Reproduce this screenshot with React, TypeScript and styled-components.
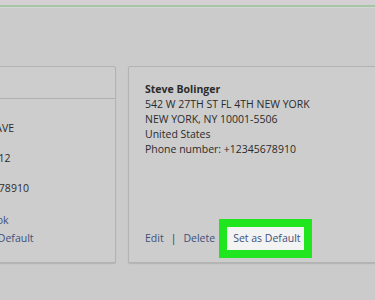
import React, {FC} from 'react';
import styled, {createGlobalStyle} from 'styled-components';

const GlobalStyle = createGlobalStyle`
  body {
    margin: 0;
    background: #cbcbcb;
    font-family: "Open Sans", "Liberation Sans", sans-serif;
    overflow: hidden;
  }
`;

const Page = styled.div`
  width: 375px;
  height: 300px;
  overflow: hidden;
  background: #cbcbcb;
`;

const TopStrip = styled.div`
  height: 5px;
  background: #d5d0d4;
  border-bottom: 2px solid #a6c6a8;
  box-shadow: 0 1px 0 #d3d6d3;
`;

const CardRow = styled.div`
  display: flex;
  gap: 12px;
  margin-left: -139px;
  padding-top: 59px;
`;

const Card = styled.div`
  flex: 0 0 auto;
  width: 255px;
  height: 197px;
  box-sizing: border-box;
  border: 1px solid #b3b3b3;
  border-radius: 2px;
  box-shadow: 0 1px 1px rgba(0, 0, 0, 0.12);
  background: #cdcdcd;
  display: flex;
  flex-direction: column;
`;

const CardHeader = styled.div`
  flex: 0 0 31px;
  border-bottom: 1px solid #b0b0b0;
`;

const CardBody = styled.div<{ top: number }>`
  flex: 1;
  display: flex;
  flex-direction: column;
  padding: ${(p) => p.top}px 16px 16px 16px;
`;

const Line = styled.div<{ bold?: boolean }>`
  font-size: 10.5px;
  line-height: 15px;
  color: #2b2b2b;
  font-weight: ${(p) => (p.bold ? 700 : 400)};
  white-space: nowrap;
`;

const Links = styled.div`
  display: flex;
  align-items: center;
  font-size: 10.5px;
  line-height: 15px;
  color: #3e5079;
  white-space: nowrap;
`;

const LinkText = styled.span`
  color: #3e5079;
`;

const Sep = styled.span`
  color: #333;
  margin: 0 7px;
`;

const DefaultLink = styled.span<{ marked?: boolean }>`
  display: inline-block;
  margin: ${(p) => (p.marked ? '-12px 0 -12px 4px' : '0 0 0 18px')};
  padding: ${(p) => (p.marked ? '4px 3px 4px 6px' : '0')};
  border: ${(p) => (p.marked ? '8px solid #1fe61f' : 'none')};
  background: ${(p) => (p.marked ? '#f3f3f3' : 'transparent')};
  color: #3e5079;
`;

const ExtraLink = styled.div`
  margin-top: auto;
  margin-bottom: 3px;
  font-size: 10.5px;
  line-height: 15px;
  color: #3e5079;
  white-space: nowrap;
`;

const Spacer = styled.div`
  margin-top: auto;
`;

interface IAddress {
  name: string;
  lines: string[];
  phone: string;
}

const AddressLines: FC<{ address: IAddress }> = ({address}) => (
  <>
    <Line bold>{address.name}</Line>
    {address.lines.map((l) => (
      <Line key={l}>{l}</Line>
    ))}
    <Line>Phone number: {address.phone}</Line>
  </>
);

const LinkRow: FC<{ marked?: boolean }> = ({marked}) => (
  <Links>
    <LinkText>Edit</LinkText>
    <Sep>|</Sep>
    <LinkText>Delete</LinkText>
    <DefaultLink marked={marked}>Set as Default</DefaultLink>
  </Links>
);

const App: FC = () => {
  const left: IAddress = {
    name: 'Steve Bolinger',
    lines: ['1600 W PENNSYLVANIA AVE', 'APT 4B', 'NEW YORK, NY 10001-1012', 'United States'],
    phone: '+12345678910',
  };
  const right: IAddress = {
    name: 'Steve Bolinger',
    lines: ['542 W 27TH ST FL 4TH NEW YORK', 'NEW YORK, NY 10001-5506', 'United States'],
    phone: '+12345678910',
  };
  return (
    <Page>
      <GlobalStyle />
      <TopStrip />
      <CardRow>
        <Card>
          <CardHeader />
          <CardBody top={7}>
            <AddressLines address={left} />
            <ExtraLink>Save to your Address Book</ExtraLink>
            <LinkRow />
          </CardBody>
        </Card>
        <Card>
          <CardBody top={15}>
            <AddressLines address={right} />
            <Spacer />
            <LinkRow marked />
          </CardBody>
        </Card>
      </CardRow>
    </Page>
  );
};

export default App;
